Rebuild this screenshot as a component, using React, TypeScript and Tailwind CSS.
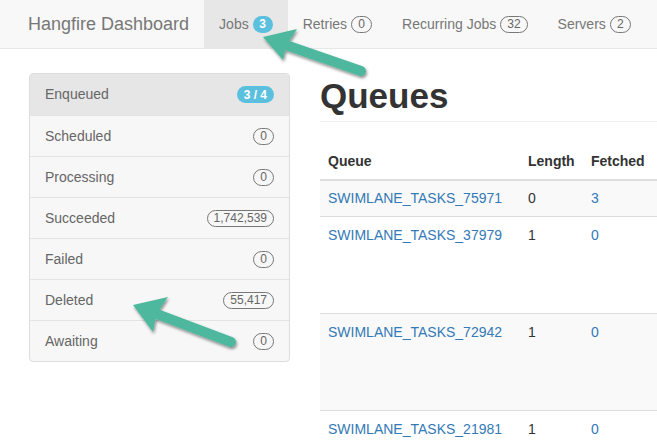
import React from "react";

const navItems = [
  { label: "Jobs", count: "3", active: true },
  { label: "Retries", count: "0" },
  { label: "Recurring Jobs", count: "32" },
  { label: "Servers", count: "2" },
];

const states = [
  { label: "Enqueued", count: "3 / 4", active: true },
  { label: "Scheduled", count: "0" },
  { label: "Processing", count: "0" },
  { label: "Succeeded", count: "1,742,539" },
  { label: "Failed", count: "0" },
  { label: "Deleted", count: "55,417" },
  { label: "Awaiting", count: "0" },
];

const queues = [
  { name: "SWIMLANE_TASKS_75971", length: "0", fetched: "3", h: "h-[35px] pt-[7px]", striped: true },
  { name: "SWIMLANE_TASKS_37979", length: "1", fetched: "0", h: "h-[97px] pt-[8px]" },
  { name: "SWIMLANE_TASKS_72942", length: "1", fetched: "0", h: "h-[97px] pt-[8px]", striped: true },
  { name: "SWIMLANE_TASKS_21981", length: "1", fetched: "0", h: "h-[97px] pt-[8px]" },
];

const Outline = ({ value }: { value: string }) => (
  <span className="inline-flex items-center justify-center h-[17px] min-w-[21px] px-[6px] rounded-full border border-[#777] text-[12px] leading-none text-[#666]">
    {value}
  </span>
);

const Arrow = ({ tip, wing1, wing2, tail }: { tip: string; wing1: string; wing2: string; tail: string }) => {
  const [tx, ty] = tip.split(",").map(Number);
  const [ax, ay] = tail.split(",").map(Number);
  const [w1x, w1y] = wing1.split(",").map(Number);
  const [w2x, w2y] = wing2.split(",").map(Number);
  // notch a bit behind the tip along the shaft
  const nx = tx + (ax - tx) * 0.24;
  const ny = ty + (ay - ty) * 0.24;
  return (
    <g>
      <line x1={nx} y1={ny} x2={ax} y2={ay} stroke="#4db89e" strokeWidth={10} strokeLinecap="round" />
      <polygon points={`${tx},${ty} ${w1x},${w1y} ${nx},${ny} ${w2x},${w2y}`} fill="#4db89e" />
    </g>
  );
};

const App = () => {
  return (
    <div className="relative w-[657px] h-[448px] overflow-hidden bg-white font-['Liberation_Sans',Arial,sans-serif] text-[14px] text-[#333]">
      {/* navbar */}
      <div className="flex h-[49px] bg-[#f8f8f8] border-b border-[#e7e7e7] pl-[13px]">
        <div className="flex items-center px-[15px] text-[18px] text-[#777]">Hangfire Dashboard</div>
        {navItems.map((item) => (
          <div
            key={item.label}
            className={`flex items-center gap-[4px] px-[15px] text-[#777] ${item.active ? "bg-[#e7e7e7] text-[#555]" : ""}`}
          >
            <span>{item.label}</span>
            {item.active ? (
              <span className="inline-flex items-center justify-center h-[17px] min-w-[20px] px-[6px] rounded-full bg-[#5bc0de] text-white text-[12px] font-bold">
                {item.count}
              </span>
            ) : (
              <Outline value={item.count} />
            )}
          </div>
        ))}
      </div>

      <div className="flex pt-[24px]">
        {/* sidebar */}
        <div className="ml-[29px] w-[261px] shrink-0 self-start rounded-[4px] border border-[#ddd] bg-[#f7f7f7] overflow-hidden">
          {states.map((s, i) => (
            <div
              key={s.label}
              className={`flex items-center justify-between h-[41px] px-[15px] text-[#666] ${i > 0 ? "border-t border-[#e3e3e3]" : ""} ${s.active ? "bg-[#e6e6e6] text-[#555]" : ""}`}
            >
              <span>{s.label}</span>
              {s.active ? (
                <span className="inline-flex items-center h-[17px] px-[7px] rounded-full bg-[#5bc0de] text-white text-[12px] font-bold">
                  {s.count}
                </span>
              ) : (
                <Outline value={s.count} />
              )}
            </div>
          ))}
        </div>

        {/* main */}
        <div className="ml-[30px] flex-1 min-w-0">
          <h1 className="h-[49px] border-b border-[#eee] text-[35px] font-bold leading-[40px] text-[#333] pt-[3px]">Queues</h1>
          <div className="mt-[21px] w-[500px]">
            <div className="flex h-[38px] items-center border-b-2 border-[#ddd] font-bold">
              <div className="w-[200px] px-[8px]">Queue</div>
              <div className="w-[63px] px-[8px]">Length</div>
              <div className="flex-1 px-[8px]">Fetched</div>
            </div>
            {queues.map((q, i) => (
              <div
                key={q.name}
                className={`flex ${q.h} leading-[20px] ${i > 0 ? "border-t border-[#ddd]" : ""} ${q.striped ? "bg-[#f9f9f9]" : ""}`}
              >
                <div className="w-[200px] px-[8px] text-[#337ab7]">{q.name}</div>
                <div className="w-[63px] px-[8px]">{q.length}</div>
                <div className="flex-1 px-[8px] text-[#337ab7]">{q.fetched}</div>
              </div>
            ))}
          </div>
        </div>
      </div>

      {/* pointer arrows */}
      <svg className="absolute inset-0 pointer-events-none" width={657} height={448}>
        <defs>
          <filter id="shadow" x="-20%" y="-20%" width="140%" height="140%">
            <feDropShadow dx="1" dy="2" stdDeviation="1.5" floodColor="#000" floodOpacity="0.45" />
          </filter>
        </defs>
        <g filter="url(#shadow)">
          <Arrow tip="263,37" wing1="297,29" wing2="283,60" tail="361,71" />
          <Arrow tip="133,305" wing1="168,297" wing2="153,332" tail="231,342" />
        </g>
      </svg>
    </div>
  );
};

export default App;
